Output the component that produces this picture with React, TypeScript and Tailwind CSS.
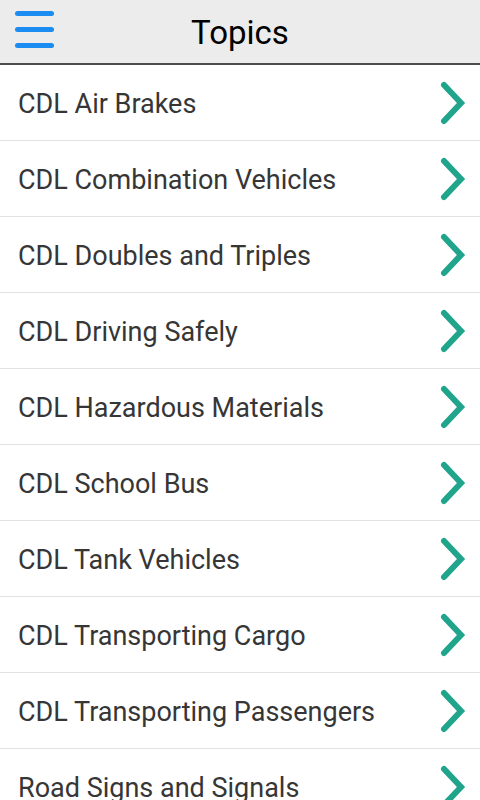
const topics = [
  "CDL Air Brakes",
  "CDL Combination Vehicles",
  "CDL Doubles and Triples",
  "CDL Driving Safely",
  "CDL Hazardous Materials",
  "CDL School Bus",
  "CDL Tank Vehicles",
  "CDL Transporting Cargo",
  "CDL Transporting Passengers",
  "Road Signs and Signals",
];

function Chevron() {
  return (
    <svg width="30" height="44" viewBox="0 0 30 44" className="shrink-0">
      <polyline
        points="7,4 24,22 7,40"
        fill="none"
        stroke="#20a48b"
        strokeWidth="6"
        strokeLinecap="round"
        strokeLinejoin="miter"
      />
    </svg>
  );
}

export default function App() {
  return (
    <div className="w-[480px] h-[800px] overflow-hidden bg-white" style={{ fontFamily: "Roboto, 'Liberation Sans', sans-serif" }}>
      <header className="relative h-[65px] bg-[#ececec] border-b-[2px] border-[#4d4d4d] flex items-center justify-center">
        <button className="absolute left-[15px] top-[11px] flex flex-col gap-[11px]">
          <span className="block w-[39px] h-[5px] rounded-full bg-[#1b8cf2]" />
          <span className="block w-[39px] h-[5px] rounded-full bg-[#1b8cf2]" />
          <span className="block w-[39px] h-[5px] rounded-full bg-[#1b8cf2]" />
        </button>
        <h1 className="text-[33px] font-normal text-black leading-none mt-[2px]">Topics</h1>
      </header>
      <ul>
        {topics.map((t) => (
          <li
            key={t}
            className="h-[76px] flex items-center justify-between pl-[18px] pr-[13px] border-b border-[#e2e2e2]"
          >
            <span className="text-[27px] font-normal text-[#363636] leading-none mt-[4px]">{t}</span>
            <Chevron />
          </li>
        ))}
      </ul>
    </div>
  );
}
